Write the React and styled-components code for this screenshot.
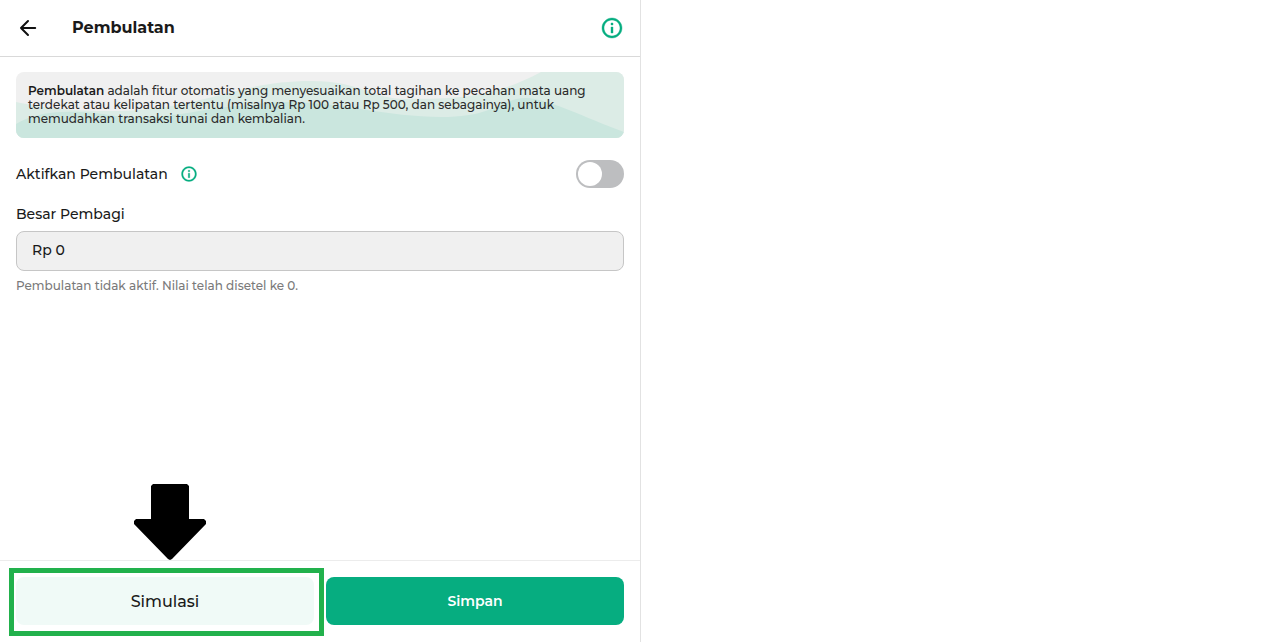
import React, { useState } from "react";
import styled, { createGlobalStyle } from "styled-components";

const GlobalStyle = createGlobalStyle`
  *, *::before, *::after { box-sizing: border-box; }
  body {
    margin: 0;
    background: #fff;
    color: #1a1a1a;
    font-family: Montserrat, Inter, sans-serif;
    font-size: 14px;
    font-weight: 500;
  }
  button, input { font: inherit; color: inherit; }
`;

const Panel = styled.div`
  display: flex;
  flex-direction: column;
  width: calc(50% + 2px);
  min-height: 100vh;
  border-right: 1px solid #e2e2e2;
`;

const Header = styled.header`
  display: flex;
  align-items: center;
  gap: 32px;
  padding: 16px;
  border-bottom: 1px solid #d9d9d9;
`;

const Title = styled.h1`
  flex: 1;
  margin: 0;
  font-size: 16px;
  line-height: 24px;
  font-weight: 700;
`;

const IconButton = styled.button`
  display: flex;
  padding: 0;
  border: 0;
  background: none;
  color: ${(p) => (p.$accent ? "#06ad80" : "#111")};
  cursor: pointer;
`;

const Content = styled.main`
  flex: 1;
  padding: 15px 16px 16px;
`;

const Banner = styled.section`
  position: relative;
  overflow: hidden;
  padding: 12px;
  border-radius: 8px;
  background: #f0f0f0;
`;

const BannerArt = styled.svg`
  position: absolute;
  inset: 0;
  width: 100%;
  height: 100%;
`;

const BannerText = styled.p`
  position: relative;
  margin: 0;
  font-size: 12px;
  line-height: 14px;
  color: #2b2b2b;

  strong { font-weight: 600; color: #1a1a1a; }
`;

const SettingRow = styled.div`
  display: flex;
  align-items: center;
  gap: 12px;
  margin: 22px 0 16px;
`;

const Label = styled.label`
  display: block;
  font-size: 14px;
  line-height: 20px;
`;

const Switch = styled.input`
  appearance: none;
  display: flex;
  width: 48px;
  height: 28px;
  margin: 0 0 0 auto;
  padding: 2px;
  border-radius: 14px;
  background: ${(p) => (p.checked ? "#06ad80" : "#bdbec0")};
  cursor: pointer;

  &::before {
    content: "";
    width: 24px;
    height: 24px;
    margin-left: ${(p) => (p.checked ? "20px" : "0")};
    border-radius: 50%;
    background: #fff;
  }
`;

const TextField = styled.input`
  display: block;
  width: 100%;
  height: 40px;
  margin: 7px 0 6px;
  padding: 0 15px 2px;
  border: 1px solid #c6c6c6;
  border-radius: 8px;
  background: #f0f0f0;
  font-size: 14px;
`;

const HelperText = styled.p`
  margin: 0;
  font-size: 12px;
  line-height: 18px;
  color: #7a7a7a;
`;

const Footer = styled.footer`
  display: grid;
  grid-template-columns: 1fr 1fr;
  gap: 12px;
  padding: 16px 16px 17px;
  border-top: 1px solid #ececec;
`;

const ActionSlot = styled.div`
  position: relative;
`;

const ActionButton = styled.button`
  display: block;
  width: 100%;
  height: 48px;
  border: 0;
  border-radius: 8px;
  background: ${(p) => (p.$primary ? "#06ad80" : "#f0faf7")};
  color: ${(p) => (p.$primary ? "#fff" : "#1a1a1a")};
  font-size: ${(p) => (p.$primary ? "14px" : "16px")};
  font-weight: ${(p) => (p.$primary ? 600 : 500)};
  cursor: pointer;
`;

const Highlight = styled.div`
  position: absolute;
  inset: -9px -10px -11px -7px;
  border: 5px solid #22b14c;
  pointer-events: none;
`;

const PointerArrow = styled.svg`
  position: absolute;
  left: calc(50% - 31px);
  bottom: calc(100% + 17px);
  pointer-events: none;
`;

function InfoIcon({ size }) {
  return (
    <svg width={size} height={size} viewBox="0 0 24 24" fill="currentColor" aria-hidden="true">
      <path d="M11 7h2v2h-2zm0 4h2v6h-2zm1-9C6.48 2 2 6.48 2 12s4.48 10 10 10 10-4.48 10-10S17.52 2 12 2zm0 18c-4.41 0-8-3.59-8-8s3.59-8 8-8 8 3.59 8 8-3.59 8-8 8z" stroke="currentColor" strokeWidth="0.4" />
    </svg>
  );
}

function BackIcon() {
  return (
    <svg width="24" height="24" viewBox="0 0 24 24" fill="none" stroke="currentColor" strokeWidth="2" strokeLinecap="round" strokeLinejoin="round" aria-hidden="true">
      <path d="M19.2 12H5M12 5l-7 7 7 7" />
    </svg>
  );
}

export default function App() {
  const [active, setActive] = useState(false);

  return (
    <>
      <GlobalStyle />
      <Panel>
        <Header>
          <IconButton type="button" aria-label="Kembali">
            <BackIcon />
          </IconButton>
          <Title>Pembulatan</Title>
          <IconButton type="button" $accent aria-label="Informasi">
            <InfoIcon size={24} />
          </IconButton>
        </Header>
        <Content>
          <Banner>
            <BannerArt viewBox="0 0 608 66" preserveAspectRatio="none" aria-hidden="true">
              <path d="M0 30C25 35 50 39 90 39C190 39 215 9 296 9C345 9 355 27 390 27C450 27 480 24 525 0H608V66H0Z" fill="#dcece6" />
              <path d="M0 52C20 40 50 36 100 44C150 50 180 36 235 33C300 22 360 45 425 45C480 45 485 26 510 26C530 26 570 46 608 60V66H0Z" fill="#cae6de" />
            </BannerArt>
            <BannerText>
              <strong>Pembulatan</strong> adalah fitur otomatis yang menyesuaikan total tagihan ke pecahan mata uang
              <br />
              terdekat atau kelipatan tertentu (misalnya Rp 100 atau Rp 500, dan sebagainya), untuk
              <br />
              memudahkan transaksi tunai dan kembalian.
            </BannerText>
          </Banner>
          <SettingRow>
            <Label htmlFor="rounding">Aktifkan Pembulatan</Label>
            <IconButton type="button" $accent aria-label="Tentang pembulatan">
              <InfoIcon size={18} />
            </IconButton>
            <Switch
              id="rounding"
              type="checkbox"
              role="switch"
              checked={active}
              onChange={(e) => setActive(e.target.checked)}
            />
          </SettingRow>
          <Label htmlFor="divisor">Besar Pembagi</Label>
          <TextField id="divisor" type="text" value="Rp 0" readOnly aria-describedby="divisor-help" />
          <HelperText id="divisor-help">Pembulatan tidak aktif. Nilai telah disetel ke 0.</HelperText>
        </Content>
        <Footer>
          <ActionSlot>
            <ActionButton type="button">Simulasi</ActionButton>
            <Highlight />
            <PointerArrow width="72" height="76" viewBox="0 0 72 76" aria-hidden="true">
              <path d="M19 0H53L55 2V35H70L72 37V40L38 75L36 76L34 75L0 40V37L2 35H17V2Z" />
            </PointerArrow>
          </ActionSlot>
          <ActionButton type="button" $primary>Simpan</ActionButton>
        </Footer>
      </Panel>
    </>
  );
}
